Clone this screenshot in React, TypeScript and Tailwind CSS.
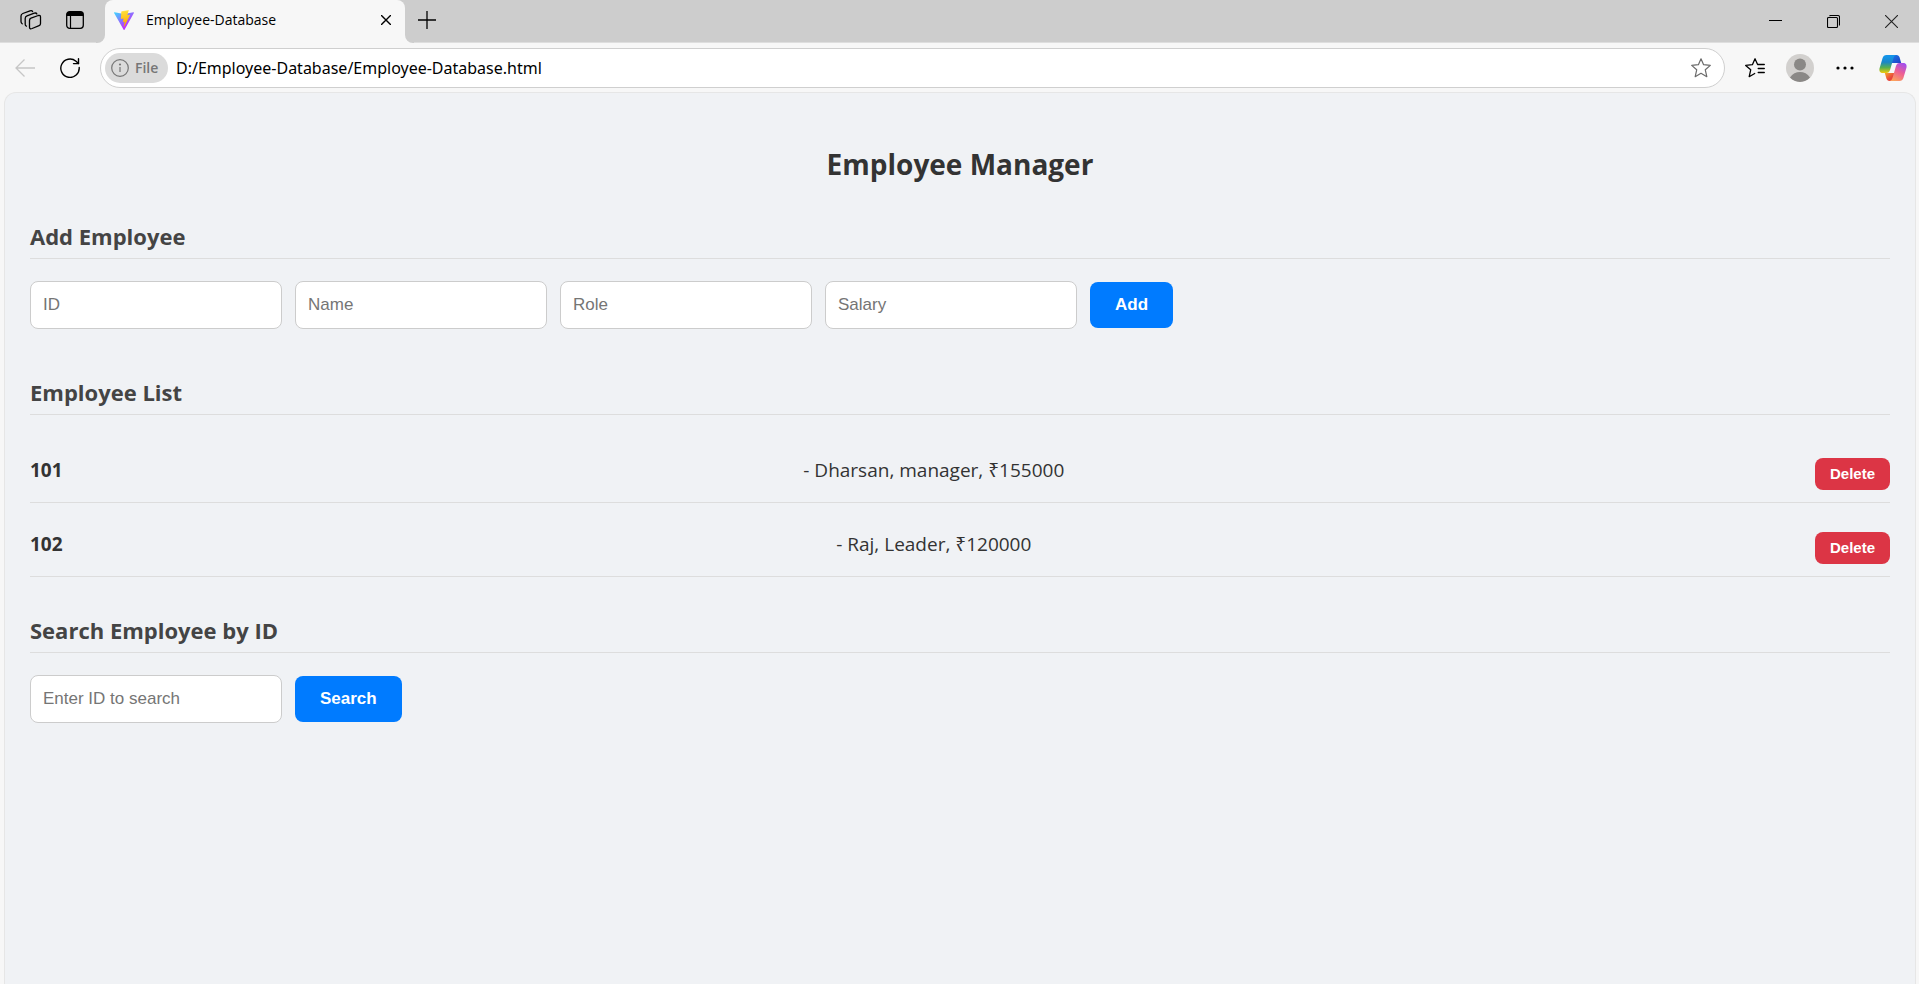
import { useId, useState } from "react";
import type { FormEvent, InputHTMLAttributes, ReactNode } from "react";

type Employee = { id: string; name: string; role: string; salary: string };

const initialEmployees: Employee[] = [
  { id: "101", name: "Dharsan", role: "manager", salary: "155000" },
  { id: "102", name: "Raj", role: "Leader", salary: "120000" },
];

function ViteLogo() {
  const a = useId();
  const b = useId();
  return (
    <svg viewBox="0 0 256 257" className="size-5" aria-hidden="true">
      <defs>
        <linearGradient id={a} x1="-.828%" x2="57.636%" y1="7.652%" y2="78.411%">
          <stop offset="0%" stopColor="#41D1FF" />
          <stop offset="100%" stopColor="#BD34FE" />
        </linearGradient>
        <linearGradient id={b} x1="43.376%" x2="50.316%" y1="2.242%" y2="89.03%">
          <stop offset="0%" stopColor="#FFEA83" />
          <stop offset="8.333%" stopColor="#FFDD35" />
          <stop offset="100%" stopColor="#FFA800" />
        </linearGradient>
      </defs>
      <path
        fill={`url(#${a})`}
        d="M255.153 37.938L134.897 252.976c-2.483 4.44-8.862 4.466-11.382.048L.875 37.958c-2.746-4.814 1.371-10.646 6.827-9.67l120.385 21.517a6.537 6.537 0 0 0 2.322-.004l117.867-21.483c5.438-.991 9.574 4.796 6.877 9.62Z"
      />
      <path
        fill={`url(#${b})`}
        d="M185.432.063L96.44 17.501a3.268 3.268 0 0 0-2.634 3.014l-5.474 92.456a3.268 3.268 0 0 0 3.997 3.378l24.777-5.718c2.318-.535 4.413 1.507 3.936 3.838l-7.361 36.047c-.495 2.426 1.782 4.5 4.151 3.78l15.304-4.649c2.372-.72 4.652 1.36 4.15 3.788l-11.698 56.621c-.732 3.542 3.979 5.473 5.943 2.437l1.313-2.028l72.516-144.72c1.215-2.423-.88-5.186-3.54-4.672l-25.505 4.922c-2.396.462-4.435-1.77-3.759-4.114l16.646-57.705c.677-2.35-1.37-4.583-3.769-4.113Z"
      />
    </svg>
  );
}

function CopilotLogo() {
  const l = useId();
  const r = useId();
  const t = useId();
  const b = useId();
  return (
    <svg viewBox="0 0 28 26" className="h-[26px] w-7" aria-hidden="true">
      <defs>
        <linearGradient id={l} x1="0" y1="0" x2="0" y2="1">
          <stop offset="0.1" stopColor="#1494e8" />
          <stop offset="0.4" stopColor="#1a86c8" />
          <stop offset="0.7" stopColor="#57b04f" />
          <stop offset="1" stopColor="#f2cb0c" />
        </linearGradient>
        <linearGradient id={r} x1="0.8" y1="0" x2="0.3" y2="1">
          <stop offset="0" stopColor="#a04df0" />
          <stop offset="0.5" stopColor="#ee5f93" />
          <stop offset="1" stopColor="#fba35c" />
        </linearGradient>
        <linearGradient id={t} x1="0" y1="0" x2="1" y2="1">
          <stop offset="0.2" stopColor="#1b6fe0" />
          <stop offset="1" stopColor="#1f3fc4" />
        </linearGradient>
        <linearGradient id={b} x1="0" y1="0" x2="1" y2="1">
          <stop offset="0" stopColor="#f8a62a" />
          <stop offset="0.6" stopColor="#e8453c" />
        </linearGradient>
      </defs>
      <path fill={`url(#${t})`} d="M12 0h5.500c1.700 0 2.600 1 3.100 2.500L22.200 8H12.500z" />
      <path fill={`url(#${b})`} d="M16 26h-5.500c-1.700 0-2.600-1-3.100-2.500L5.800 18h9.700z" />
      <path
        fill={`url(#${l})`}
        d="M7.500 0H17.500c-1.900.3-2.700 1.700-3.300 4l-3 10.500C10.500 17 9.300 18 7.500 18H4C1 18 0 16 .5 13.500L3.600 3C4.200 1.200 5.500 0 7.500 0z"
      />
      <path
        fill={`url(#${r})`}
        d="M20.500 26H10.500c1.900-.3 2.700-1.700 3.300-4l3-10.500C17.500 9 18.700 8 20.500 8H24c3 0 4 2 3.500 4.500L24.400 23c-.6 1.800-1.900 3-3.900 3z"
      />
    </svg>
  );
}

function ChromeButton({ label, className = "", children }: { label: string; className?: string; children: ReactNode }) {
  return (
    <button type="button" aria-label={label} className={`flex shrink-0 items-center justify-center ${className}`}>
      {children}
    </button>
  );
}

function TabBar() {
  return (
    <div className="flex h-[43px] items-end bg-[#cdcdcd] text-black">
      <div className="flex h-[43px] flex-1 items-end">
        <div className="flex h-full w-24 items-center gap-6 border-b border-[#dedede] pb-[2px] pl-5">
          <ChromeButton label="Workspaces">
            <svg viewBox="0 0 22 22" className="size-[22px]" fill="none" stroke="currentColor" strokeWidth="1.300" strokeLinejoin="round" strokeLinecap="round" aria-hidden="true">
              <path d="M11 9.200 18.300 6.500Q20.500 6 20.500 8v6.500q0 1.500-1.400 2.100l-7 2.900Q9.500 20.500 9.500 18.200v-6.700q0-1.700 1.500-2.300z" />
              <path d="M6.400 17.200Q5.200 16.700 5.200 15.200V9.500Q5.200 7.600 7 6.900L14.300 4.200Q16.300 3.600 16.900 5" />
              <path d="M2.200 14.800Q1 14 1 12.600V7Q1 5.200 2.800 4.500L10 1.800Q12 1.200 12.600 2.600" />
            </svg>
          </ChromeButton>
          <ChromeButton label="Tab actions">
            <svg viewBox="0 0 18 18" className="size-[18px]" fill="none" aria-hidden="true">
              <rect x="0.700" y="0.700" width="16.600" height="16.600" rx="3" stroke="currentColor" strokeWidth="1.300" />
              <path d="M.7 5V3.500A2.800 2.800 0 0 1 3.500.7h11a2.800 2.800 0 0 1 2.800 2.800V5z" fill="currentColor" />
              <path d="M4.500 5v12" stroke="currentColor" strokeWidth="1.200" />
            </svg>
          </ChromeButton>
        </div>
        <div className="h-[9px] w-[9px] bg-[#f7f7f7]">
          <div className="size-full rounded-br-lg bg-[#cdcdcd]" />
        </div>
        <div className="flex h-full w-[300px] items-center rounded-t-lg bg-[#f7f7f7] pr-[14px] pb-[3px] pl-[9px]">
          <ViteLogo />
          <span className="ml-3 flex-1 font-['Open_Sans',sans-serif] text-sm">Employee-Database</span>
          <ChromeButton label="Close tab">
            <svg viewBox="0 0 10 10" className="size-[10px]" stroke="currentColor" strokeWidth="1.400" aria-hidden="true">
              <path d="M0 0l10 10M10 0 0 10" />
            </svg>
          </ChromeButton>
        </div>
        <div className="h-[9px] w-[9px] bg-[#f7f7f7]">
          <div className="size-full rounded-bl-lg bg-[#cdcdcd]" />
        </div>
        <div className="flex h-full flex-1 items-center border-b border-[#dedede] pb-[3px] pl-1">
          <ChromeButton label="New tab">
            <svg viewBox="0 0 18 18" className="size-[18px]" stroke="currentColor" strokeWidth="1.300" aria-hidden="true">
              <path d="M9 0v18M0 9h18" />
            </svg>
          </ChromeButton>
        </div>
      </div>
      <div className="flex h-full items-center gap-[45px] border-b border-[#dedede] pr-[21px]">
        <ChromeButton label="Minimize">
          <svg viewBox="0 0 13 13" className="size-[13px]" stroke="currentColor" aria-hidden="true">
            <path d="M0 5.500h13" />
          </svg>
        </ChromeButton>
        <ChromeButton label="Restore">
          <svg viewBox="0 0 13 13" className="size-[13px]" fill="none" stroke="currentColor" strokeWidth="1.100" aria-hidden="true">
            <rect x="0.500" y="2.500" width="10" height="10" rx="1" />
            <path d="M2.500 1 3.200.5H11a1.500 1.500 0 0 1 1.500 1.500v8.500" />
          </svg>
        </ChromeButton>
        <ChromeButton label="Close window">
          <svg viewBox="0 0 13 13" className="size-[13px]" stroke="#222" strokeWidth="1.100" aria-hidden="true">
            <path d="M0 0l13 13M13 0 0 13" />
          </svg>
        </ChromeButton>
      </div>
    </div>
  );
}

function Toolbar() {
  return (
    <div className="flex h-[49px] items-center bg-[#f7f7f7] pr-3 pl-[15px] text-black">
      <ChromeButton label="Back" className="text-[#c6c6c6]">
        <svg viewBox="0 0 20 18" className="h-[18px] w-5" fill="none" stroke="currentColor" strokeWidth="1.300" aria-hidden="true">
          <path d="M20 9H1M9.500.500 1 9l8.500 8.500" />
        </svg>
      </ChromeButton>
      <ChromeButton label="Reload" className="ml-[25px]">
        <svg viewBox="0 0 20 20" className="size-5" fill="none" stroke="currentColor" strokeWidth="1.400" strokeLinecap="round" strokeLinejoin="round" aria-hidden="true">
          <path d="M19.200 9.500A9.200 9.200 0 1 1 16 3.200l2.500 2.300" />
          <path d="M18.500.7v4.900h-5" />
        </svg>
      </ChromeButton>
      <div className="ml-5 flex h-10 flex-1 items-center rounded-full border border-[#cfcfcf] bg-white pr-[13px] pl-1">
        <button type="button" className="flex h-[30px] w-[63px] items-center gap-[6px] rounded-full bg-[#dbdbdb] pl-[6px] font-['Open_Sans',sans-serif] text-sm font-semibold text-[#767676]">
          <svg viewBox="0 0 18 18" className="size-[18px]" fill="none" stroke="currentColor" strokeWidth="1.200" aria-hidden="true">
            <circle cx="9" cy="9" r="8.300" />
            <path d="M9 8v5" />
            <circle cx="9" cy="5.500" r="0.500" fill="currentColor" />
          </svg>
          File
        </button>
        <input
          aria-label="Address"
          defaultValue="D:/Employee-Database/Employee-Database.html"
          className="ml-2 flex-1 bg-transparent font-['Noto_Sans',sans-serif] text-base outline-none"
        />
        <ChromeButton label="Add to favorites" className="text-[#6b6b6b]">
          <svg viewBox="0 0 20 20" className="size-5" fill="none" stroke="currentColor" strokeWidth="1.200" strokeLinejoin="round" aria-hidden="true">
            <path d="M10 .8l2.600 5.900 6.700.7-5 4.400 1.500 6.900L10 15.300l-5.800 3.400 1.500-6.900-5-4.400 6.700-.7z" />
          </svg>
        </ChromeButton>
      </div>
      <ChromeButton label="Favorites" className="ml-5">
        <svg viewBox="0 0 20 20" className="size-5" fill="none" stroke="currentColor" strokeWidth="1.300" strokeLinejoin="round" strokeLinecap="round" aria-hidden="true">
          <path d="M19.300 6.500h-6.700L10 .8 7.400 6.700l-6.700.7 5 4.400-1.500 6.900 5.500-3.200M13.200 10.500h6.100M13.200 14.500h6.100" />
        </svg>
      </ChromeButton>
      <ChromeButton label="Profile" className="ml-[21px]">
        <svg viewBox="0 0 28 28" className="size-7 rounded-full" aria-hidden="true">
          <rect width="28" height="28" fill="#d2d0ce" />
          <circle cx="14" cy="10.500" r="6" fill="#8a8886" />
          <path d="M4 23.500C6.500 19.700 10 18 14 18s7.500 1.700 10 5.500C21.500 26.300 18 28 14 28S6.500 26.300 4 23.500z" fill="#8a8886" />
        </svg>
      </ChromeButton>
      <ChromeButton label="Settings and more" className="ml-[22px]">
        <svg viewBox="0 0 18 4" className="h-1 w-[18px]" fill="currentColor" aria-hidden="true">
          <circle cx="2" cy="2" r="1.600" />
          <circle cx="9" cy="2" r="1.600" />
          <circle cx="16" cy="2" r="1.600" />
        </svg>
      </ChromeButton>
      <ChromeButton label="Copilot" className="ml-[25px]">
        <CopilotLogo />
      </ChromeButton>
    </div>
  );
}

function SectionTitle({ children }: { children: ReactNode }) {
  return (
    <h2 className="border-b border-[#dddddd] pb-2 text-[22px] leading-7 font-bold text-[#444444]">{children}</h2>
  );
}

function TextField({ label, ...rest }: { label: string } & InputHTMLAttributes<HTMLInputElement>) {
  return (
    <input
      aria-label={label}
      placeholder={label}
      className="h-12 w-[252px] rounded-lg border border-[#cccccc] bg-white px-3 font-['Liberation_Sans',sans-serif] text-[17px] text-[#333333] placeholder:text-[#757575]"
      {...rest}
    />
  );
}

function PrimaryButton({ children }: { children: ReactNode }) {
  return (
    <button
      type="submit"
      className="h-[46px] rounded-lg bg-[#007bff] px-[25px] font-['Liberation_Sans',sans-serif] text-[17px] font-bold text-white"
    >
      {children}
    </button>
  );
}

const emptyForm = { id: "", name: "", role: "", salary: "" };

export default function App() {
  const [employees, setEmployees] = useState(initialEmployees);
  const [form, setForm] = useState<Employee>(emptyForm);
  const [query, setQuery] = useState("");
  const [result, setResult] = useState<string | null>(null);

  const set = (key: keyof Employee) => (e: { target: { value: string } }) =>
    setForm({ ...form, [key]: e.target.value });

  const add = (e: FormEvent) => {
    e.preventDefault();
    if (!form.id || !form.name) return;
    setEmployees([...employees, form]);
    setForm(emptyForm);
  };

  const search = (e: FormEvent) => {
    e.preventDefault();
    const found = employees.find((x) => x.id === query);
    setResult(found ? `${found.name}, ${found.role}, ₹${found.salary}` : "Employee not found");
  };

  return (
    <div className="flex min-h-screen flex-col bg-[#f7f7f7]">
      <TabBar />
      <Toolbar />
      <main className="mr-[3px] ml-1 flex-1 rounded-t-xl border border-b-0 border-[#e6e6e6] bg-[#f0f2f5] px-[25px] pt-[51px] font-['Open_Sans','Noto_Sans',sans-serif] text-[#333333]">
        <h1 className="text-center text-[28px] leading-10 font-bold">Employee Manager</h1>

        <section className="mt-[38px]">
          <SectionTitle>Add Employee</SectionTitle>
          <form onSubmit={add} className="mt-[22px] flex flex-wrap items-center gap-[13px]">
            <TextField label="ID" value={form.id} onChange={set("id")} />
            <TextField label="Name" value={form.name} onChange={set("name")} />
            <TextField label="Role" value={form.role} onChange={set("role")} />
            <TextField label="Salary" value={form.salary} onChange={set("salary")} />
            <PrimaryButton>Add</PrimaryButton>
          </form>
        </section>

        <section className="mt-[49px]">
          <SectionTitle>Employee List</SectionTitle>
          <ul className="mt-[14px]">
            {employees.map((emp) => (
              <li key={emp.id} className="flex h-[74px] items-end justify-between border-b border-[#dddddd] pb-3 text-[19px] leading-10">
                <strong>{emp.id}</strong>
                <span>
                  - {emp.name}, {emp.role}, ₹{emp.salary}
                </span>
                <button
                  type="button"
                  aria-label={`Delete ${emp.id}`}
                  onClick={() => setEmployees(employees.filter((x) => x !== emp))}
                  className="ml-[10px] h-8 rounded-lg bg-[#dc3545] px-[15px] font-['Liberation_Sans',sans-serif] text-[15px] leading-8 font-bold text-white"
                >
                  Delete
                </button>
              </li>
            ))}
          </ul>
        </section>

        <section className="mt-[39px]">
          <SectionTitle>Search Employee by ID</SectionTitle>
          <form onSubmit={search} className="mt-[22px] flex flex-wrap items-center gap-[13px]">
            <TextField label="Enter ID to search" value={query} onChange={(e) => setQuery(e.target.value)} />
            <PrimaryButton>Search</PrimaryButton>
          </form>
          {result && <p className="mt-4 text-lg">{result}</p>}
        </section>
      </main>
    </div>
  );
}
